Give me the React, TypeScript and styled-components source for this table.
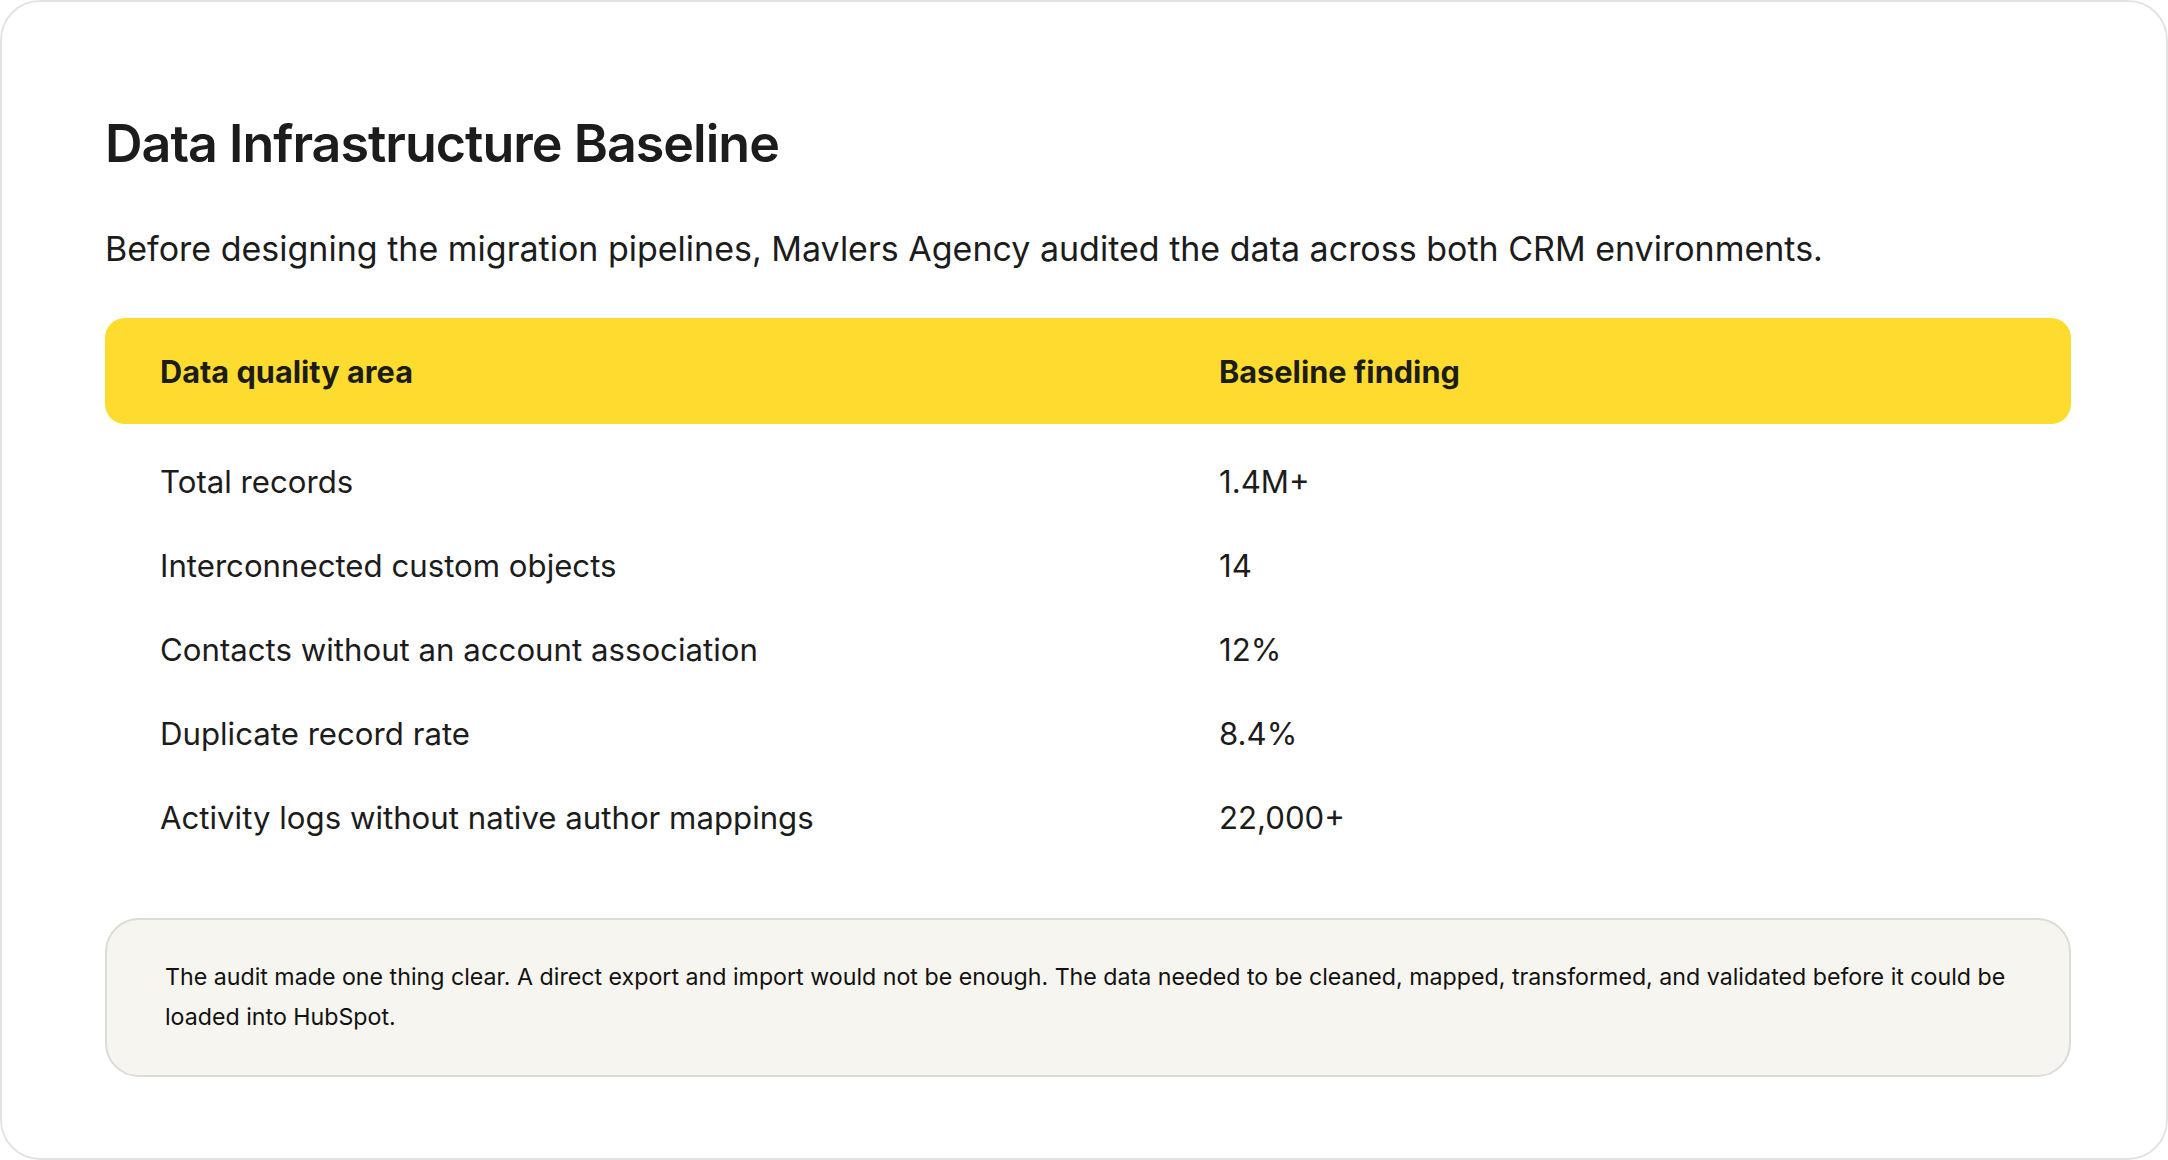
import React from 'react'
import styled, {createGlobalStyle} from 'styled-components'

const GlobalStyle = createGlobalStyle`
    html, body, #root {
        width: 100%;
        height: 100%;
        margin: 0;
        padding: 0;
    }

    body {
        background: #ffffff;
        font-family: Inter, "Noto Sans", "Liberation Sans", sans-serif;
        color: #1c1c1c;
        -webkit-font-smoothing: antialiased;
    }

    * {
        box-sizing: border-box;
    }
`

const Card = styled.section`
    width: 100%;
    height: 100%;
    border: 2px solid #e3e3e3;
    border-radius: 40px;
    background: #ffffff;
    padding: 111px 95px 83px 103px;
    display: flex;
    flex-direction: column;
`

const Title = styled.h2`
    margin: 0;
    font-size: 52px;
    line-height: 62px;
    font-weight: 600;
    letter-spacing: -1px;
    color: #1c1c1c;
`

const Lead = styled.p`
    margin: 50px 0 0;
    font-size: 34px;
    line-height: 48px;
    font-weight: 400;
    color: #1c1c1c;
`

const Table = styled.div`
    margin-top: 45px;
    display: flex;
    flex-direction: column;
`

const Row = styled.div<{ $head?: boolean }>`
    display: grid;
    grid-template-columns: 1059px 1fr;
    align-items: center;
    padding: 0 55px;
    height: ${p => (p.$head ? '106px' : '84px')};
    background: ${p => (p.$head ? '#fedc2f' : 'transparent')};
    border-radius: ${p => (p.$head ? '20px' : '0')};
    font-size: ${p => (p.$head ? '30.7px' : '31.2px')};
    font-weight: ${p => (p.$head ? 700 : 400)};
    color: #1c1c1c;
`

const Body = styled.div`
    padding-top: 16px;
    display: flex;
    flex-direction: column;
`

const Note = styled.div`
    margin-top: 58px;
    background: #f7f5ef;
    border: 2px solid #dddbd5;
    border-radius: 34px;
    padding: 37px 58px 38px;
    font-size: 23.2px;
    line-height: 40px;
    color: #111111;
`

const rows: [string, string][] = [
    ['Total records', '1.4M+'],
    ['Interconnected custom objects', '14'],
    ['Contacts without an account association', '12%'],
    ['Duplicate record rate', '8.4%'],
    ['Activity logs without native author mappings', '22,000+'],
]

export default function App() {
    return (
        <>
            <GlobalStyle/>
            <Card>
                <Title>Data Infrastructure Baseline</Title>
                <Lead>
                    Before designing the migration pipelines, Mavlers Agency audited the data across both CRM environments.
                </Lead>
                <Table>
                    <Row $head>
                        <span>Data quality area</span>
                        <span>Baseline finding</span>
                    </Row>
                    <Body>
                        {rows.map(([area, finding]) => (
                            <Row key={area}>
                                <span>{area}</span>
                                <span>{finding}</span>
                            </Row>
                        ))}
                    </Body>
                </Table>
                <Note>
                    The audit made one thing clear. A direct export and import would not be enough. The data needed to be
                    cleaned, mapped, transformed, and validated before it could be loaded into HubSpot.
                </Note>
            </Card>
        </>
    )
}
